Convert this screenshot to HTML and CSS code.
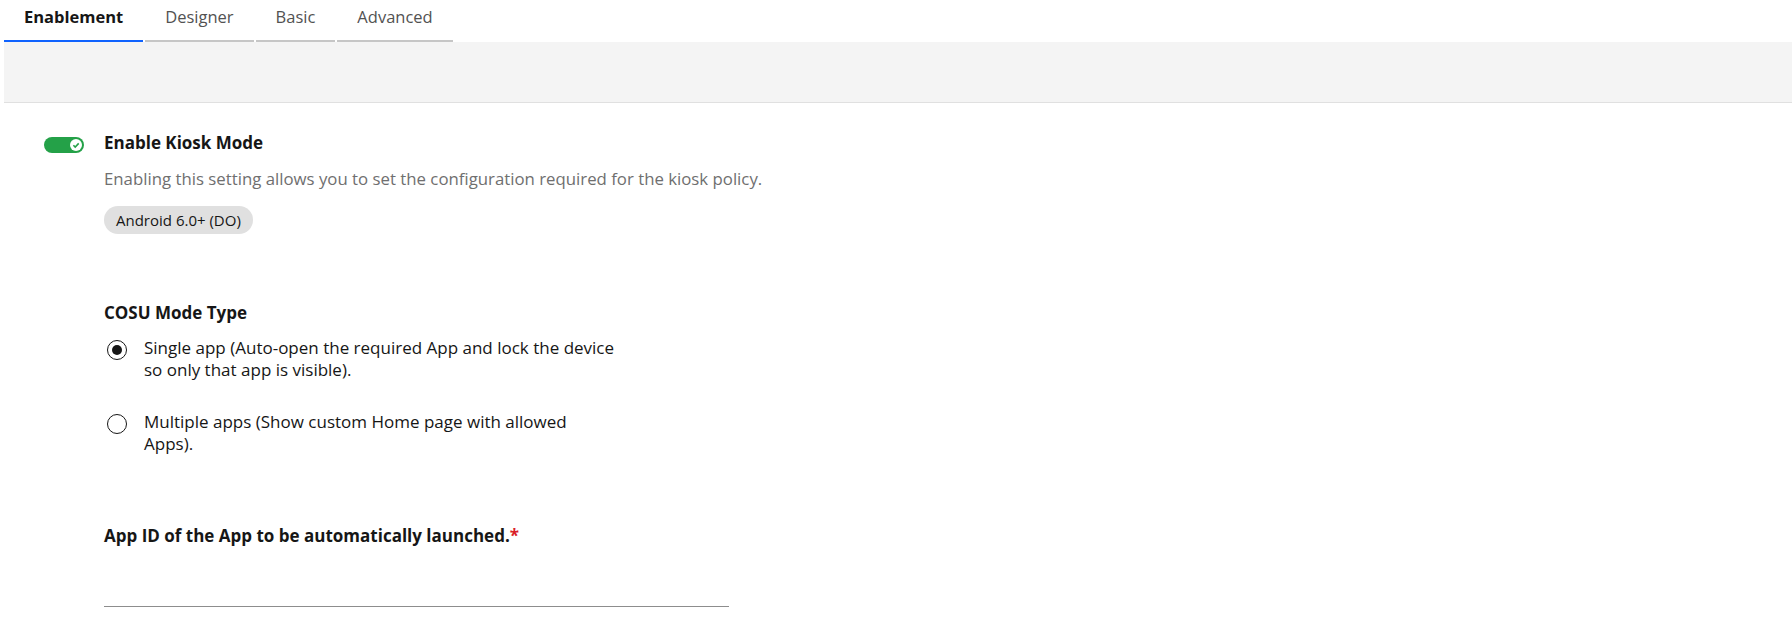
FILE: index.html
```html
<!DOCTYPE html>
<html lang="en">
<head>
    <meta charset="UTF-8">
    <meta name="viewport" content="width=device-width, initial-scale=1.0">
    <title>Kiosk policy</title>
    <link rel="stylesheet" href="styles.css">
</head>
<body>
    <nav class="tabs">
        <div class="tab active">Enablement</div>
        <div class="tab">Designer</div>
        <div class="tab">Basic</div>
        <div class="tab">Advanced</div>
    </nav>
    <div class="tab-banner"></div>

    <main class="policy-form">
        <div class="setting">
            <span class="toggle on">
                <span class="toggle-knob">
                    <svg width="12" height="12" viewBox="0 0 12 12"><path d="M3.4 6.2 5.2 8 8.7 4.4" fill="none" stroke="#24a148" stroke-width="1.6"/></svg>
                </span>
            </span>
            <div class="setting-text">
                <div class="setting-title">Enable Kiosk Mode</div>
                <div class="setting-desc">Enabling this setting allows you to set the configuration required for the kiosk policy.</div>
                <span class="tag">Android 6.0+ (DO)</span>
            </div>
        </div>

        <fieldset class="field radio-group">
            <legend class="field-label">COSU Mode Type</legend>
            <label class="radio-option">
                <input type="radio" name="cosu" checked>
                <span>Single app (Auto-open the required App and lock the device so only that app is visible).</span>
            </label>
            <label class="radio-option">
                <input type="radio" name="cosu">
                <span>Multiple apps (Show custom Home page with allowed Apps).</span>
            </label>
        </fieldset>

        <div class="field app-id">
            <label class="field-label" for="app-id">App ID of the App to be automatically launched.<span class="required">*</span></label>
            <input type="text" id="app-id" class="text-input">
        </div>
    </main>
</body>
</html>
```

FILE: styles.css
```css
:root {
    --text-primary: #161616;
    --text-secondary: #6f6f6f;
    --tab-text: #525252;
    --tab-line: #c6c6c6;
    --interactive: #0f62fe;
    --support-success: #24a148;
    --support-error: #da1e28;
    --layer: #f4f4f4;
    --border-subtle: #e0e0e0;
}

body {
    margin: 0;
    font-family: 'Open Sans', 'Noto Sans', sans-serif;
    color: var(--text-primary);
    background: white;
}

.tabs {
    display: flex;
    gap: 2px;
    padding-left: 4px;
}

.tab {
    height: 42px;
    box-sizing: border-box;
    padding: 6px 20px 0;
    font-size: 16.5px;
    line-height: 22px;
    color: var(--tab-text);
    border-bottom: 2px solid var(--tab-line);
}

.tab.active {
    color: var(--text-primary);
    font-weight: 700;
    border-bottom-color: var(--interactive);
}

.tab-banner {
    margin-left: 4px;
    height: 60px;
    background-color: var(--layer);
    border-bottom: 1px solid var(--border-subtle);
}

.policy-form {
    padding: 29px 0 0 44px;
}

.setting {
    display: flex;
    align-items: flex-start;
    gap: 20px;
}

.toggle {
    position: relative;
    width: 40px;
    height: 16px;
    margin-top: 5px;
    border-radius: 8px;
    background-color: var(--support-success);
    flex-shrink: 0;
}

.toggle-knob {
    position: absolute;
    top: 2px;
    right: 2px;
    width: 12px;
    height: 12px;
    border-radius: 50%;
    background: white;
    display: flex;
}

.setting-title {
    font-size: 17px;
    line-height: 22px;
    font-weight: 700;
}

.setting-desc {
    margin-top: 14px;
    font-size: 16.8px;
    line-height: 22px;
    color: var(--text-secondary);
}

.tag {
    display: inline-flex;
    align-items: center;
    margin-top: 16px;
    height: 28px;
    padding: 0 12px;
    border-radius: 14px;
    background-color: var(--border-subtle);
    font-size: 15px;
}

.field {
    margin: 0 0 0 60px;
    padding: 0;
    border: none;
}

.field-label {
    display: block;
    padding: 0;
    font-size: 17px;
    line-height: 22px;
    font-weight: 700;
}

.radio-group {
    margin-top: 68px;
}

.radio-option {
    display: flex;
    align-items: flex-start;
    gap: 17px;
    max-width: 511px;
    font-size: 17px;
    line-height: 22px;
    margin-top: 13px;
}

.radio-option + .radio-option {
    margin-top: 30px;
}

.radio-option input {
    appearance: none;
    margin: 3px 0 0 3px;
    width: 20px;
    height: 20px;
    border: 1px solid var(--text-primary);
    border-radius: 50%;
    flex-shrink: 0;
    display: flex;
    align-items: center;
    justify-content: center;
}

.radio-option input:checked::after {
    content: '';
    width: 10px;
    height: 10px;
    border-radius: 50%;
    background-color: var(--text-primary);
}

.app-id {
    margin-top: 70px;
}

.required {
    color: var(--support-error);
}

.text-input {
    display: block;
    box-sizing: border-box;
    margin-top: 19px;
    width: 625px;
    height: 41px;
    border: none;
    border-bottom: 1px solid #8d8d8d;
    background: transparent;
    outline: none;
}
```
